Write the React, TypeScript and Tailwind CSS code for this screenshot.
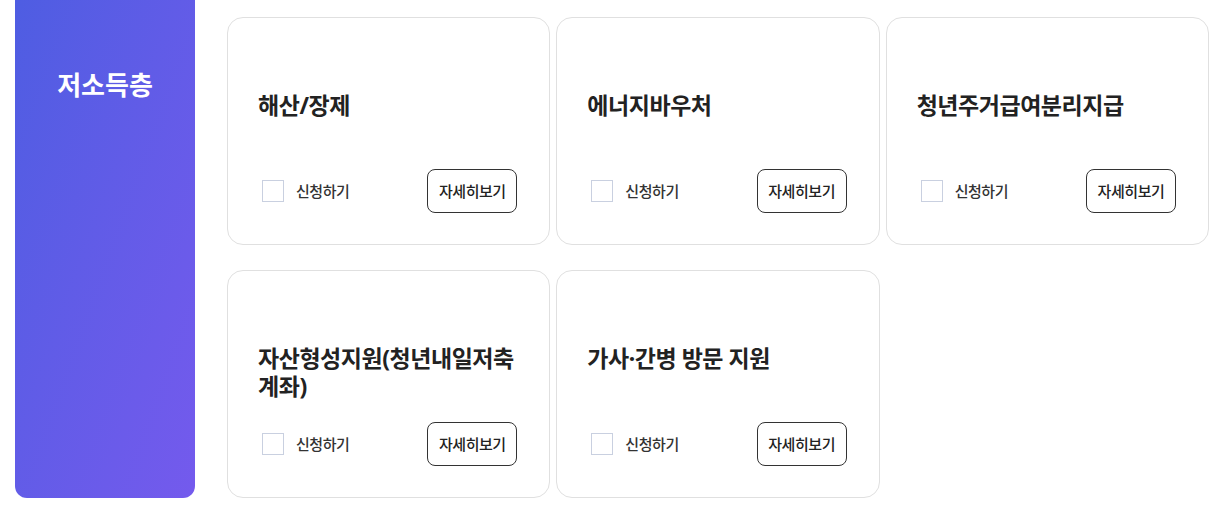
const ITEMS = [
  '해산/장제',
  '에너지바우처',
  '청년주거급여분리지급',
  '자산형성지원(청년내일저축계좌)',
  '가사·간병 방문 지원',
];

function Card({ title }: { title: string }) {
  return (
    <div className="flex h-[228px] flex-col justify-between rounded-2xl border border-[#e0e0e0] bg-white pl-[30px] pr-[32px] pt-[73px] pb-[31px]">
      <h3 className="text-[23px] font-bold leading-[28px] tracking-[-0.02em] text-[#222]">{title}</h3>
      <div className="flex items-center justify-between">
        <label className="ml-1 flex items-center gap-3">
          <span className="h-[22px] w-[22px] border border-[#c9d0e0] bg-white" />
          <span className="text-[15px] font-medium tracking-[-0.03em] text-[#333]">신청하기</span>
        </label>
        <button className="h-[44px] w-[90px] rounded-lg border border-[#333] bg-white text-[15px] font-medium tracking-[-0.03em] text-[#222]">
          자세히보기
        </button>
      </div>
    </div>
  );
}

export default function App() {
  return (
    <div
      className="flex h-[513px] w-[1226px] items-start bg-white"
      style={{ fontFamily: '"Noto Sans", "Noto Sans CJK KR", sans-serif' }}
    >
      <div className="ml-[15px] flex h-[498px] w-[180px] shrink-0 justify-center rounded-b-xl bg-gradient-to-br from-[#4e5de2] to-[#745aed] pt-[66px]">
        <h2 className="text-[26px] font-bold leading-[38px] text-white">저소득층</h2>
      </div>
      <div className="ml-[32px] mt-[17px] grid w-[982px] grid-cols-3 gap-x-[6px] gap-y-[25px]">
        {ITEMS.map((t) => (
          <Card key={t} title={t} />
        ))}
      </div>
    </div>
  );
}
